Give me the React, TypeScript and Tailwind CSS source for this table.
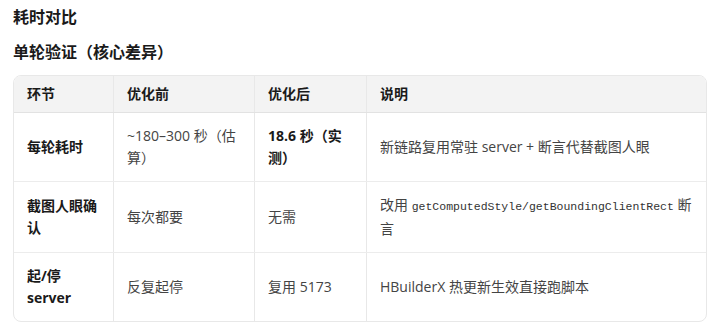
import React from "react";

const font = { fontFamily: '"Segoe UI", "Open Sans", "Noto Sans CJK SC", sans-serif' };

function Cell({ children, bold, last, header }: { children: React.ReactNode; bold?: boolean; last?: boolean; header?: boolean }) {
  return (
    <div
      className={
        "flex items-center px-[13px] text-[14px] leading-[22px] " +
        (last ? "" : "border-r border-[#e8e8e8] ") +
        (header ? "bg-[#f3f3f3] font-bold text-[#1a1a1a] h-[36px] " : "min-h-[68px] py-[12px] ") +
        (!header && bold ? "font-bold text-[#1a1a1a] " : "") +
        (!header && !bold ? "text-[#444444] " : "")
      }
    >
      <div>{children}</div>
    </div>
  );
}

export default function App() {
  const mono = { fontFamily: '"Liberation Mono", monospace' };
  return (
    <div className="bg-white w-[717px] h-[332px] px-[13px] pt-[6px]" style={font}>
      <div className="text-[16px] leading-[22px] font-bold text-[#1a1a1a]">耗时对比</div>
      <div className="mt-[12px] text-[16px] leading-[24px] font-bold text-[#1a1a1a]">单轮验证（核心差异）</div>
      <div className="mt-[11px] w-[694px] border border-[#e8e8e8] rounded-[8px] overflow-hidden">
        <div className="grid grid-cols-[100px_141px_112px_1fr] border-b border-[#e2e2e2]">
          <Cell header>环节</Cell>
          <Cell header>优化前</Cell>
          <Cell header>优化后</Cell>
          <Cell header last>说明</Cell>
        </div>
        <div className="grid grid-cols-[100px_141px_112px_1fr] border-b border-[#ececec]">
          <Cell bold>每轮耗时</Cell>
          <Cell>~180–300 秒（估算）</Cell>
          <Cell bold>18.6 秒（实测）</Cell>
          <Cell last>新链路复用常驻 server + 断言代替截图人眼</Cell>
        </div>
        <div className="grid grid-cols-[100px_141px_112px_1fr] border-b border-[#ececec]">
          <Cell bold>截图人眼确认</Cell>
          <Cell>每次都要</Cell>
          <Cell>无需</Cell>
          <Cell last>
            <span>改用 </span>
            <span className="text-[11.5px] text-[#333]" style={mono}>getComputedStyle/getBoundingClientRect</span>
            <span> 断言</span>
          </Cell>
        </div>
        <div className="grid grid-cols-[100px_141px_112px_1fr]">
          <Cell bold>起/停 server</Cell>
          <Cell>反复起停</Cell>
          <Cell>复用 5173</Cell>
          <Cell last>HBuilderX 热更新生效直接跑脚本</Cell>
        </div>
      </div>
    </div>
  );
}
